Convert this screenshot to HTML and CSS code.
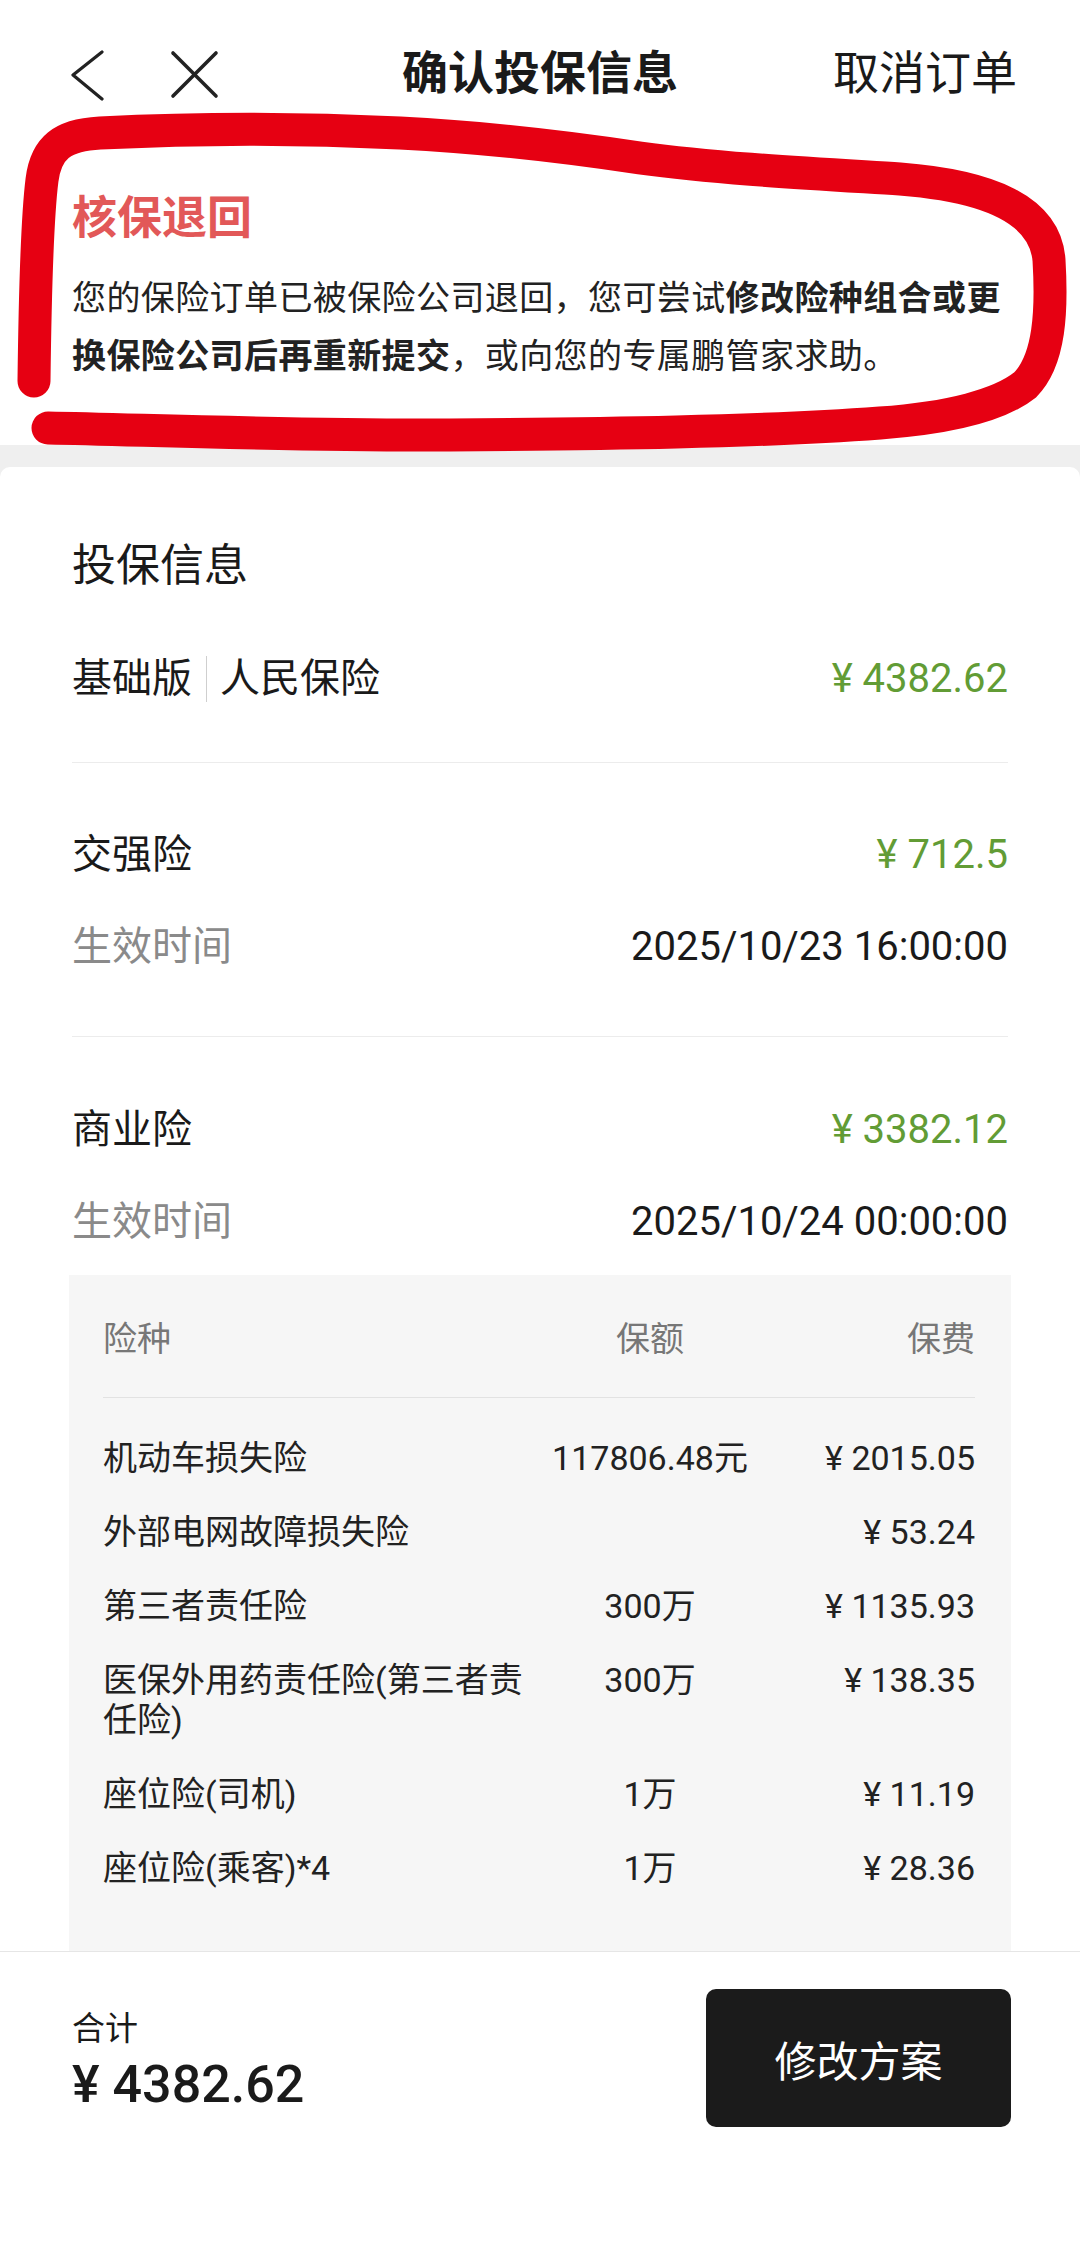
FILE: index.html
```html
<!DOCTYPE html>
<html lang="zh-CN">
<head>
  <meta charset="UTF-8">
  <meta name="viewport" content="width=device-width, initial-scale=1.0">
  <title>确认投保信息</title>
  <link rel="stylesheet" href="styles.css">
</head>
<body>
  <div class="app">
    <div class="top">
      <header class="nav">
        <div class="nav-left">
          <svg class="ic-back" width="50" height="56" viewBox="0 0 50 56">
            <polyline points="39,7 10,30 39,54" />
          </svg>
          <svg class="ic-close" width="66" height="56" viewBox="0 0 66 56">
            <line x1="15" y1="8" x2="58" y2="51" />
            <line x1="58" y1="8" x2="15" y2="51" />
          </svg>
        </div>
        <h1 class="nav-title">确认投保信息</h1>
        <div class="nav-right">取消订单</div>
      </header>

      <section class="notice">
        <h2 class="notice-title">核保退回</h2>
        <p class="notice-text">您的保险订单已被保险公司退回，您可尝试<b>修改险种组合或更换保险公司后再重新提交</b>，或向您的专属鹏管家求助。</p>
      </section>

      <!-- hand drawn red circle around the notice -->
      <svg class="scribble" width="1080" height="470" viewBox="0 0 1080 470">
        <path d="M34,381 C35,300 37,220 42,180 C46,148 62,135 100,133 C200,128 300,128 400,133 C480,137 560,146 640,158 C720,169 820,174 900,179 C990,186 1045,210 1049,260 C1052,310 1050,360 1025,385 C1000,405 950,418 880,423 C760,432 600,434 450,435 C300,436 150,430 48,428" />
      </svg>
    </div>

    <main class="main">
      <div class="card">
        <div class="sec sec-first">
          <h3 class="card-title">投保信息</h3>
          <div class="row">
            <span class="plan">基础版<i class="sep"></i>人民保险</span>
            <span class="price">¥ 4382.62</span>
          </div>
        </div>

        <div class="sec">
          <div class="row">
            <span>交强险</span>
            <span class="price">¥ 712.5</span>
          </div>
          <div class="row">
            <span class="muted">生效时间</span>
            <span>2025/10/23 16:00:00</span>
          </div>
        </div>

        <div class="sec sec-last">
          <div class="row">
            <span>商业险</span>
            <span class="price">¥ 3382.12</span>
          </div>
          <div class="row">
            <span class="muted">生效时间</span>
            <span>2025/10/24 00:00:00</span>
          </div>

          <div class="table">
            <div class="t-row t-head">
              <span>险种</span>
              <span class="t-amt">保额</span>
              <span class="t-fee">保费</span>
            </div>
            <div class="t-body">
              <div class="t-row">
                <span>机动车损失险</span>
                <span class="t-amt">117806.48元</span>
                <span class="t-fee">¥ 2015.05</span>
              </div>
              <div class="t-row">
                <span>外部电网故障损失险</span>
                <span class="t-amt"></span>
                <span class="t-fee">¥ 53.24</span>
              </div>
              <div class="t-row">
                <span>第三者责任险</span>
                <span class="t-amt">300万</span>
                <span class="t-fee">¥ 1135.93</span>
              </div>
              <div class="t-row">
                <span>医保外用药责任险(第三者责任险)</span>
                <span class="t-amt">300万</span>
                <span class="t-fee">¥ 138.35</span>
              </div>
              <div class="t-row">
                <span>座位险(司机)</span>
                <span class="t-amt">1万</span>
                <span class="t-fee">¥ 11.19</span>
              </div>
              <div class="t-row">
                <span>座位险(乘客)*4</span>
                <span class="t-amt">1万</span>
                <span class="t-fee">¥ 28.36</span>
              </div>
            </div>
          </div>
        </div>
      </div>
    </main>

    <footer class="bar">
      <div class="total">
        <div class="total-label">合计</div>
        <div class="total-num">¥ 4382.62</div>
      </div>
      <button class="btn">修改方案</button>
    </footer>
  </div>
</body>
</html>
```

FILE: styles.css
```css
/* Reset */
* {
  margin: 0;
  padding: 0;
  box-sizing: border-box;
}
body {
  font-family: Roboto, "Noto Sans CJK SC", sans-serif;
  color: #1a1a1a;
  background: #fff;
}

.app {
  display: flex;
  flex-direction: column;
  height: 100vh;
  overflow: hidden;
}

/* Top area */
.top {
  position: relative;
  background: #fff;
}

.nav {
  display: grid;
  grid-template-columns: 1fr auto 1fr;
  align-items: center;
  height: 146px;
  padding: 0 63px;
}
.nav-left {
  display: flex;
  align-items: center;
  gap: 45px;
}
.nav-left svg {
  fill: none;
  stroke: #222;
  stroke-linecap: round;
  stroke-linejoin: round;
}
.ic-back { stroke-width: 3.2; }
.ic-close { stroke-width: 3.6; }
.nav-title {
  font-size: 46px;
  font-weight: 700;
  line-height: 60px;
}
.nav-right {
  justify-self: end;
  font-size: 46px;
  line-height: 60px;
}

.notice {
  padding: 44px 72px 60px;
}
.notice-title {
  font-size: 45px;
  font-weight: 700;
  line-height: 58px;
  color: #e25858;
  margin-bottom: 21px;
}
.notice-text {
  font-size: 34px;
  letter-spacing: 0.4px;
  line-height: 58px;
  color: #222;
}
.notice-text b {
  font-weight: 700;
}

.scribble {
  position: absolute;
  top: 0;
  left: 0;
  z-index: 2;
  overflow: visible;
  pointer-events: none;
}
.scribble path {
  fill: none;
  stroke: #e60012;
  stroke-width: 33;
  stroke-linecap: round;
  stroke-linejoin: round;
}

/* Main card */
.main {
  flex: 1;
  min-height: 0;
  overflow: hidden;
  background: #efefef;
  padding-top: 22px;
}
.card {
  background: #fff;
  border-radius: 10px 10px 0 0;
  padding: 0 72px;
  height: 100%;
}

.sec {
  display: flex;
  flex-direction: column;
  gap: 36px;
  padding: 64px 0 61px;
  border-bottom: 1px solid #ececec;
}
.sec-first {
  gap: 0;
  padding: 69px 0 55px;
}
.sec-last {
  padding: 65px 0 0;
  border-bottom: none;
}
.card-title {
  font-size: 44px;
  font-weight: 400;
  line-height: 60px;
  margin-bottom: 55px;
}

.row {
  display: flex;
  justify-content: space-between;
  align-items: center;
  font-size: 40px;
  line-height: 56px;
}
.plan {
  display: flex;
  align-items: center;
}
.sep {
  display: inline-block;
  width: 1px;
  height: 46px;
  background: #cfcfcf;
  margin: 0 13px 0 14px;
}
.price {
  color: #629c35;
}
.muted {
  color: #8a8a8a;
}

/* Coverage table */
.table {
  margin: -11px -3px 0;
  background: #f6f6f6;
  padding: 44px 36px 80px 34px;
}
.t-row {
  display: grid;
  grid-template-columns: 432px 230px 1fr;
  align-items: start;
  font-size: 34px;
  line-height: 40px;
  color: #222;
}
.t-head {
  color: #777;
  padding-bottom: 38px;
  border-bottom: 1px solid #e2e2e2;
}
.t-amt {
  text-align: center;
}
.t-fee {
  text-align: right;
}
.t-body {
  display: flex;
  flex-direction: column;
  gap: 34px;
  padding-top: 40px;
}

/* Bottom bar */
.bar {
  display: flex;
  justify-content: space-between;
  align-items: flex-start;
  padding: 37px 69px 120px 72px;
  border-top: 1px solid #e6e6e6;
  background: #fff;
}
.total {
  margin-top: 18px;
}
.total-label {
  font-size: 33px;
  line-height: 44px;
}
.total-num {
  font-size: 52px;
  font-weight: 500;
  line-height: 60px;
  margin-top: 4px;
}
.btn {
  width: 305px;
  height: 138px;
  border: none;
  border-radius: 10px;
  background: #1b1b1b;
  color: #fff;
  font-family: Roboto, "Noto Sans CJK SC", sans-serif;
  font-size: 42px;
}
```
